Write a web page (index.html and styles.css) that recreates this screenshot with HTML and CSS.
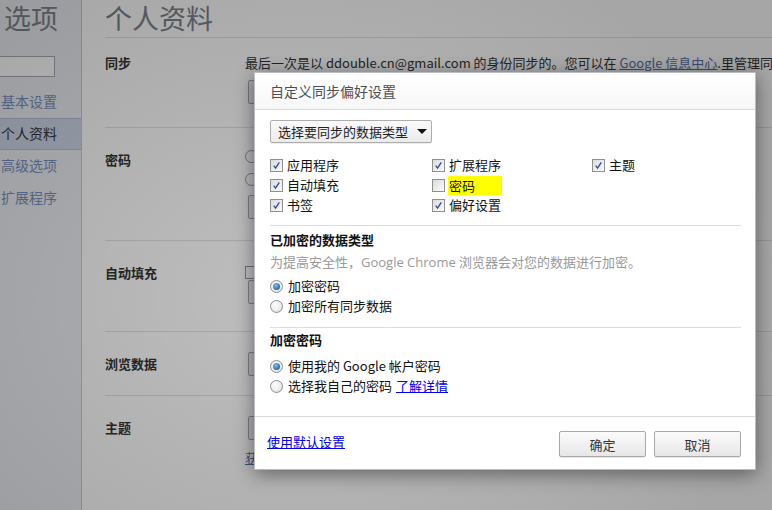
FILE: index.html
```html
<!DOCTYPE html>
<html lang="zh-CN">
<head>
<meta charset="utf-8">
<title>选项 - 个人资料</title>
<link rel="stylesheet" href="styles.css">
</head>
<body>
<div class="page">
  <aside class="sidebar">
    <div class="side-title">选项</div>
    <div class="search"></div>
    <nav class="nav">
      <div class="nav-item">基本设置</div>
      <div class="nav-item selected">个人资料</div>
      <div class="nav-item">高级选项</div>
      <div class="nav-item">扩展程序</div>
    </nav>
  </aside>
  <main class="main">
    <h1 class="main-title">个人资料</h1>
    <section class="sec sec-sync">
      <div class="sec-label">同步</div>
      <div class="sec-body">
        <div class="line">最后一次是以 ddouble.cn@gmail.com 的身份同步的。您可以在 <span class="plink">Google 信息中心</span>.里管理同步的数据</div>
        <div class="pbtn"></div>
      </div>
    </section>
    <section class="sec sec-pass">
      <div class="sec-label">密码</div>
      <div class="sec-body">
        <div class="pradio"></div>
        <div class="pradio"></div>
        <div class="pbtn"></div>
      </div>
    </section>
    <section class="sec sec-auto">
      <div class="sec-label">自动填充</div>
      <div class="sec-body">
        <div class="pcheck"></div>
        <div class="pbtn"></div>
      </div>
    </section>
    <section class="sec sec-browse">
      <div class="sec-label">浏览数据</div>
      <div class="sec-body">
        <div class="pbtn"></div>
      </div>
    </section>
    <section class="sec sec-theme">
      <div class="sec-label">主题</div>
      <div class="sec-body">
        <div class="pbtn"></div>
        <div class="plink theme-link">获取主题</div>
      </div>
    </section>
  </main>
</div>

<div class="overlay"></div>

<div class="dialog">
  <div class="dlg-head">自定义同步偏好设置</div>
  <div class="dlg-body">
    <div class="select">选择要同步的数据类型<span class="caret"></span></div>
    <div class="checks">
      <label class="chk"><span class="box on"><svg viewBox="0 0 13 13"><path d="M3.2 6.6 L5.4 9.6 L9.8 2.8" fill="none" stroke="#2e4c9c" stroke-width="1.6"/></svg></span>应用程序</label>
      <label class="chk"><span class="box on"><svg viewBox="0 0 13 13"><path d="M3.2 6.6 L5.4 9.6 L9.8 2.8" fill="none" stroke="#2e4c9c" stroke-width="1.6"/></svg></span>扩展程序</label>
      <label class="chk"><span class="box on"><svg viewBox="0 0 13 13"><path d="M3.2 6.6 L5.4 9.6 L9.8 2.8" fill="none" stroke="#2e4c9c" stroke-width="1.6"/></svg></span>主题</label>
      <label class="chk"><span class="box on"><svg viewBox="0 0 13 13"><path d="M3.2 6.6 L5.4 9.6 L9.8 2.8" fill="none" stroke="#2e4c9c" stroke-width="1.6"/></svg></span>自动填充</label>
      <label class="chk"><span class="box"></span><span class="hl">密码</span></label>
      <span class="chk-empty"></span>
      <label class="chk"><span class="box on"><svg viewBox="0 0 13 13"><path d="M3.2 6.6 L5.4 9.6 L9.8 2.8" fill="none" stroke="#2e4c9c" stroke-width="1.6"/></svg></span>书签</label>
      <label class="chk"><span class="box on"><svg viewBox="0 0 13 13"><path d="M3.2 6.6 L5.4 9.6 L9.8 2.8" fill="none" stroke="#2e4c9c" stroke-width="1.6"/></svg></span>偏好设置</label>
    </div>
    <hr class="sep">
    <div class="heading">已加密的数据类型</div>
    <div class="desc">为提高安全性，Google Chrome 浏览器会对您的数据进行加密。</div>
    <div class="radios">
      <label class="rad"><span class="circle on"></span>加密密码</label>
      <label class="rad"><span class="circle"></span>加密所有同步数据</label>
    </div>
    <hr class="sep sep2">
    <div class="heading heading2">加密密码</div>
    <div class="radios radios2">
      <label class="rad"><span class="circle on"></span>使用我的 Google 帐户密码</label>
      <label class="rad"><span class="circle"></span>选择我自己的密码 <a class="link" href="#">了解详情</a></label>
    </div>
  </div>
  <div class="dlg-foot">
    <a class="link foot-link" href="#">使用默认设置</a>
    <div class="btns">
      <button class="btn">确定</button>
      <button class="btn">取消</button>
    </div>
  </div>
</div>
</body>
</html>
```

FILE: styles.css
```css
* { box-sizing: border-box; }
html, body { margin: 0; padding: 0; }
body {
  width: 772px;
  height: 510px;
  overflow: hidden;
  font-family: "Open Sans", "Noto Sans CJK SC", sans-serif;
  font-size: 13px;
  color: #333;
  background: #fff;
  position: relative;
}

/* ---------- background page ---------- */
.page {
  display: flex;
  height: 510px;
}
.sidebar {
  width: 82px;
  flex: none;
  background: #eceef3;
  border-right: 1px solid #c9cbcf;
  overflow: hidden;
}
.side-title {
  font-family: "Noto Sans CJK SC", sans-serif;
  font-size: 27px;
  line-height: 36px;
  height: 36px;
  color: #7e848d;
  padding-left: 4px;
}
.search {
  margin-top: 20px;
  width: 57px;
  height: 21px;
  margin-left: -2px;
  background: #fff;
  border: 1px solid #a8abb2;
}
.nav { margin-top: 9px; }
.nav-item {
  font-family: "Noto Sans CJK SC", sans-serif;
  font-size: 14px;
  line-height: 31px;
  height: 32px;
  color: #7b8fbd;
  padding-left: 1px;
}
.nav-item.selected {
  background: #cfd8e8;
  border-top: 1px solid #b4bfd2;
  border-bottom: 1px solid #b4bfd2;
  color: #333;
  line-height: 29px;
}
.main {
  flex: 1;
  padding-left: 23px;
  overflow: hidden;
}
.main-title {
  margin: 0;
  font-family: "Noto Sans CJK SC", sans-serif;
  font-weight: normal;
  font-size: 27px;
  line-height: 36px;
  height: 38px;
  color: #7e848d;
  border-bottom: 1px solid #e3e3e3;
}
.sec {
  display: flex;
  border-bottom: 1px solid #e3e3e3;
}
.sec-label {
  width: 140px;
  flex: none;
  font-family: "Noto Sans CJK SC", sans-serif;
  font-weight: bold;
  font-size: 13px;
  color: #333;
  line-height: 20px;
}
.sec-body { flex: 1; white-space: nowrap; }
.line {
  font-family: "Noto Sans CJK SC", sans-serif;
  line-height: 20px;
  color: #333;
}
.plink { color: #5b70a8; text-decoration: underline; }
.pbtn {
  width: 90px;
  height: 24px;
  border: 1px solid #aaa;
  border-radius: 2px;
  background: #f4f4f4;
  margin-left: 3px;
}
.pradio {
  width: 13px; height: 13px;
  border-radius: 50%;
  border: 1px solid #999;
  background: #fff;
  margin-bottom: 10px;
}
.pcheck {
  width: 13px; height: 13px;
  border: 1px solid #999;
  background: #fff;
}
.sec-sync { height: 90px; padding-top: 15px; }
.sec-sync .pbtn { margin-top: 7px; }
.sec-pass { height: 113px; padding-top: 22px; }
.sec-pass .pbtn { margin-top: -1px; }
.sec-auto { height: 91px; padding-top: 22px; }
.sec-auto .pcheck { margin-top: 3px; }
.sec-auto .pbtn { margin-top: 1px; }
.sec-browse { height: 64px; padding-top: 22px; }
.sec-browse .pbtn { margin-top: -2px; }
.sec-theme { height: 114px; padding-top: 22px; border-bottom: none; }
.sec-theme .pbtn { margin-top: -2px; }
.theme-link {
  display: block;
  font-family: "Noto Sans CJK SC", sans-serif;
  margin-top: 8px;
  line-height: 20px;
}

/* ---------- overlay ---------- */
.overlay {
  position: absolute;
  inset: 0;
  background: radial-gradient(ellipse 480px 380px at 300px 300px, rgba(0,0,0,0.25), rgba(0,0,0,0.35));
}

/* ---------- dialog ---------- */
.dialog {
  position: absolute;
  left: 254px;
  top: 72px;
  width: 502px;
  height: 398px;
  background: #fff;
  border: 1px solid #b9bcc2;
  box-shadow: 0 4px 18px rgba(0,0,0,0.45);
  font-family: "Open Sans", "Noto Sans CJK SC", sans-serif;
  display: flex;
  flex-direction: column;
}
.dlg-head {
  height: 37px;
  flex: none;
  padding-left: 15px;
  font-family: "Noto Sans CJK SC", sans-serif;
  font-size: 14px;
  line-height: 37px;
  color: #4a4f56;
  background: linear-gradient(#fff, #f7f7f8);
  border-bottom: 1px solid #d6d9de;
}
.dlg-body {
  padding: 10px 14px 0 15px;
  flex: none;
  height: 306px;
}
.select {
  display: inline-flex;
  align-items: center;
  height: 23px;
  width: 162px;
  padding-left: 7px;
  font-family: "Noto Sans CJK SC", sans-serif;
  font-size: 13px;
  color: #222;
  border: 1px solid #adadad;
  border-radius: 2px;
  background: linear-gradient(#fafafa, #ebebeb);
  box-shadow: 0 1px 1px rgba(0,0,0,0.08);
}
.caret {
  margin-left: 9px;
  width: 0; height: 0;
  border-left: 5px solid transparent;
  border-right: 5px solid transparent;
  border-top: 5px solid #111;
}
.checks {
  margin-top: 12px;
  display: grid;
  grid-template-columns: 162px 160px 1fr;
  grid-auto-rows: 20px;
}
.chk, .rad {
  display: flex;
  align-items: center;
  font-family: "Noto Sans CJK SC", sans-serif;
  font-size: 13px;
  color: #111;
  line-height: 20px;
  white-space: nowrap;
}
.box {
  width: 13px;
  height: 13px;
  border: 1px solid #8e8f8f;
  background: linear-gradient(135deg, #dcdcdc, #fbfbfb);
  margin-right: 4px;
  flex: none;
  display: flex;
}
.box svg { width: 11px; height: 11px; }
.hl {
  background: #ffff00;
  display: inline-block;
  width: 54px;
  height: 19px;
  line-height: 19px;
  margin-left: -1px;
  padding-left: 1px;
}
.sep {
  margin: 10px 0 0 0;
  border: none;
  border-top: 1px solid #dcdcdc;
  height: 0;
}
.heading {
  margin-top: 4px;
  font-family: "Noto Sans CJK SC", sans-serif;
  font-weight: bold;
  font-size: 13px;
  line-height: 20px;
  color: #111;
}
.desc {
  margin-top: 2px;
  font-size: 13px;
  line-height: 20px;
  color: #999;
  white-space: nowrap;
}
.radios { margin-top: 4px; }
.circle {
  width: 13px;
  height: 13px;
  border-radius: 50%;
  border: 1px solid #8e8f8f;
  background: radial-gradient(circle at 40% 35%, #fff, #dcdcdc);
  margin-right: 5px;
  flex: none;
  display: flex;
  align-items: center;
  justify-content: center;
}
.circle.on::after {
  content: "";
  width: 7px;
  height: 7px;
  border-radius: 50%;
  background: radial-gradient(circle at 40% 35%, #7ac3ee, #1f5f9a 80%);
}
.sep2 { margin-top: 11px; }
.heading2 { margin-top: 2px; }
.radios2 { margin-top: 6px; }
.link {
  color: #0000ee;
  text-decoration: underline;
  margin-left: 4px;
}
.dlg-foot {
  flex: 1;
  border-top: 1px solid #d6d9de;
  display: flex;
  align-items: flex-start;
  justify-content: space-between;
  padding: 14px 14px 0 12px;
}
.foot-link {
  margin: 1px 0 0 0;
  font-family: "Noto Sans CJK SC", sans-serif;
  font-size: 13px;
  line-height: 20px;
}
.btns { display: flex; gap: 8px; }
.btn {
  width: 87px;
  height: 26px;
  font-family: "Noto Sans CJK SC", sans-serif;
  font-size: 13px;
  color: #333;
  border: 1px solid #a9a9a9;
  border-radius: 2px;
  background: linear-gradient(#fbfbfb, #e7e7e7);
  box-shadow: 0 1px 1px rgba(0,0,0,0.1);
  padding: 0;
}
```
